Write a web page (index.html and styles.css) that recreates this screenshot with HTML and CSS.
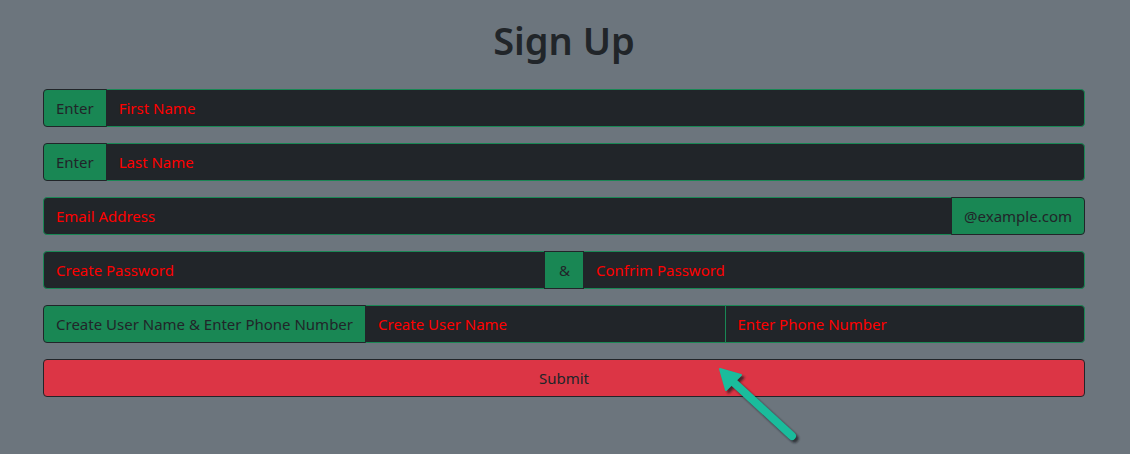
FILE: index.html
```html
<!DOCTYPE html>
<html lang="en">
<head>
<meta charset="utf-8">
<title>Sign Up</title>
<link rel="stylesheet" href="styles.css">
</head>
<body>
<main class="page">
  <h1 class="title">Sign Up</h1>
  <form class="form">
    <div class="group">
      <span class="addon">Enter</span>
      <input class="field after-addon" type="text" placeholder="First Name">
    </div>
    <div class="group">
      <span class="addon">Enter</span>
      <input class="field after-addon" type="text" placeholder="Last Name">
    </div>
    <div class="group">
      <input class="field before-addon" type="text" placeholder="Email Address">
      <span class="addon">@example.com</span>
    </div>
    <div class="group">
      <input class="field before-addon" type="password" placeholder="Create Password">
      <span class="addon amp">&amp;</span>
      <input class="field after-addon" type="password" placeholder="Confrim Password">
    </div>
    <div class="group">
      <span class="addon">Create User Name &amp; Enter Phone Number</span>
      <input class="field after-addon" type="text" placeholder="Create User Name">
      <input class="field between" type="text" placeholder="Enter Phone Number">
    </div>
    <button class="submit" type="button">Submit</button>
  </form>
  <svg class="arrow" width="1130" height="454" viewBox="0 0 1130 454" aria-hidden="true">
    <defs>
      <filter id="sh" x="-20%" y="-20%" width="140%" height="140%">
        <feGaussianBlur stdDeviation="1.2"/>
      </filter>
    </defs>
    <g transform="translate(2.5,2.5)" fill="#1b1e21" stroke="#1b1e21" opacity="0.75" filter="url(#sh)">
      <line x1="792" y1="436" x2="730" y2="379" stroke-width="8" stroke-linecap="round"/>
      <polygon points="720,369 741,375 726,390" stroke-width="2" stroke-linejoin="round"/>
    </g>
    <g fill="#1abc9c" stroke="#1abc9c">
      <line x1="792" y1="436" x2="730" y2="379" stroke-width="8" stroke-linecap="round"/>
      <polygon points="720,369 741,375 726,390" stroke-width="2" stroke-linejoin="round"/>
    </g>
  </svg>
</main>
</body>
</html>
```

FILE: styles.css
```css
* {
  box-sizing: border-box;
}

html, body {
  margin: 0;
  padding: 0;
}

body {
  background: #6c757d;
  font-family: "Noto Sans", "Open Sans", sans-serif;
  font-size: 16px;
  color: #212529;
  width: 1130px;
  height: 454px;
  overflow: hidden;
}

.page {
  padding: 0 45px 0 43px;
}

.title {
  margin: 17px 0 26px;
  font-size: 38px;
  line-height: 46px;
  font-weight: 600;
  text-align: center;
  color: #212529;
}

.form {
  display: flex;
  flex-direction: column;
  gap: 16px;
}

.group {
  display: flex;
  height: 38px;
}

.addon {
  position: relative;
  z-index: 1;
  display: flex;
  align-items: center;
  padding: 0 12px;
  background: #198754;
  color: #212529;
  border: 1px solid #212529;
  white-space: nowrap;
  font-size: 15px;
}

.amp {
  padding: 0 13px 0 14px;
}

.group > .addon:first-child {
  border-radius: 4px 0 0 4px;
}

.group > .addon:last-child {
  border-radius: 0 4px 4px 0;
}

.field {
  flex: 1 1 0;
  min-width: 0;
  height: 38px;
  padding: 0 12px;
  background: #212529;
  color: #ff0000;
  border: 1px solid #198754;
  font-family: inherit;
  font-size: 15px;
  outline: none;
}

.field::placeholder {
  color: #ff0000;
  opacity: 1;
}

.group > .field:first-child {
  border-radius: 4px 0 0 4px;
}

.group > .field:last-child {
  border-radius: 0 4px 4px 0;
}

.after-addon {
  margin-left: -1px;
}

.before-addon {
  margin-right: -1px;
}

.between {
  margin-left: -1px;
}

.submit {
  height: 38px;
  width: 100%;
  background: #dc3545;
  color: #212529;
  border: 1px solid #212529;
  border-radius: 4px;
  font-family: inherit;
  font-size: 15px;
  cursor: pointer;
}

.arrow {
  position: absolute;
  left: 0;
  top: 0;
  pointer-events: none;
}
```
